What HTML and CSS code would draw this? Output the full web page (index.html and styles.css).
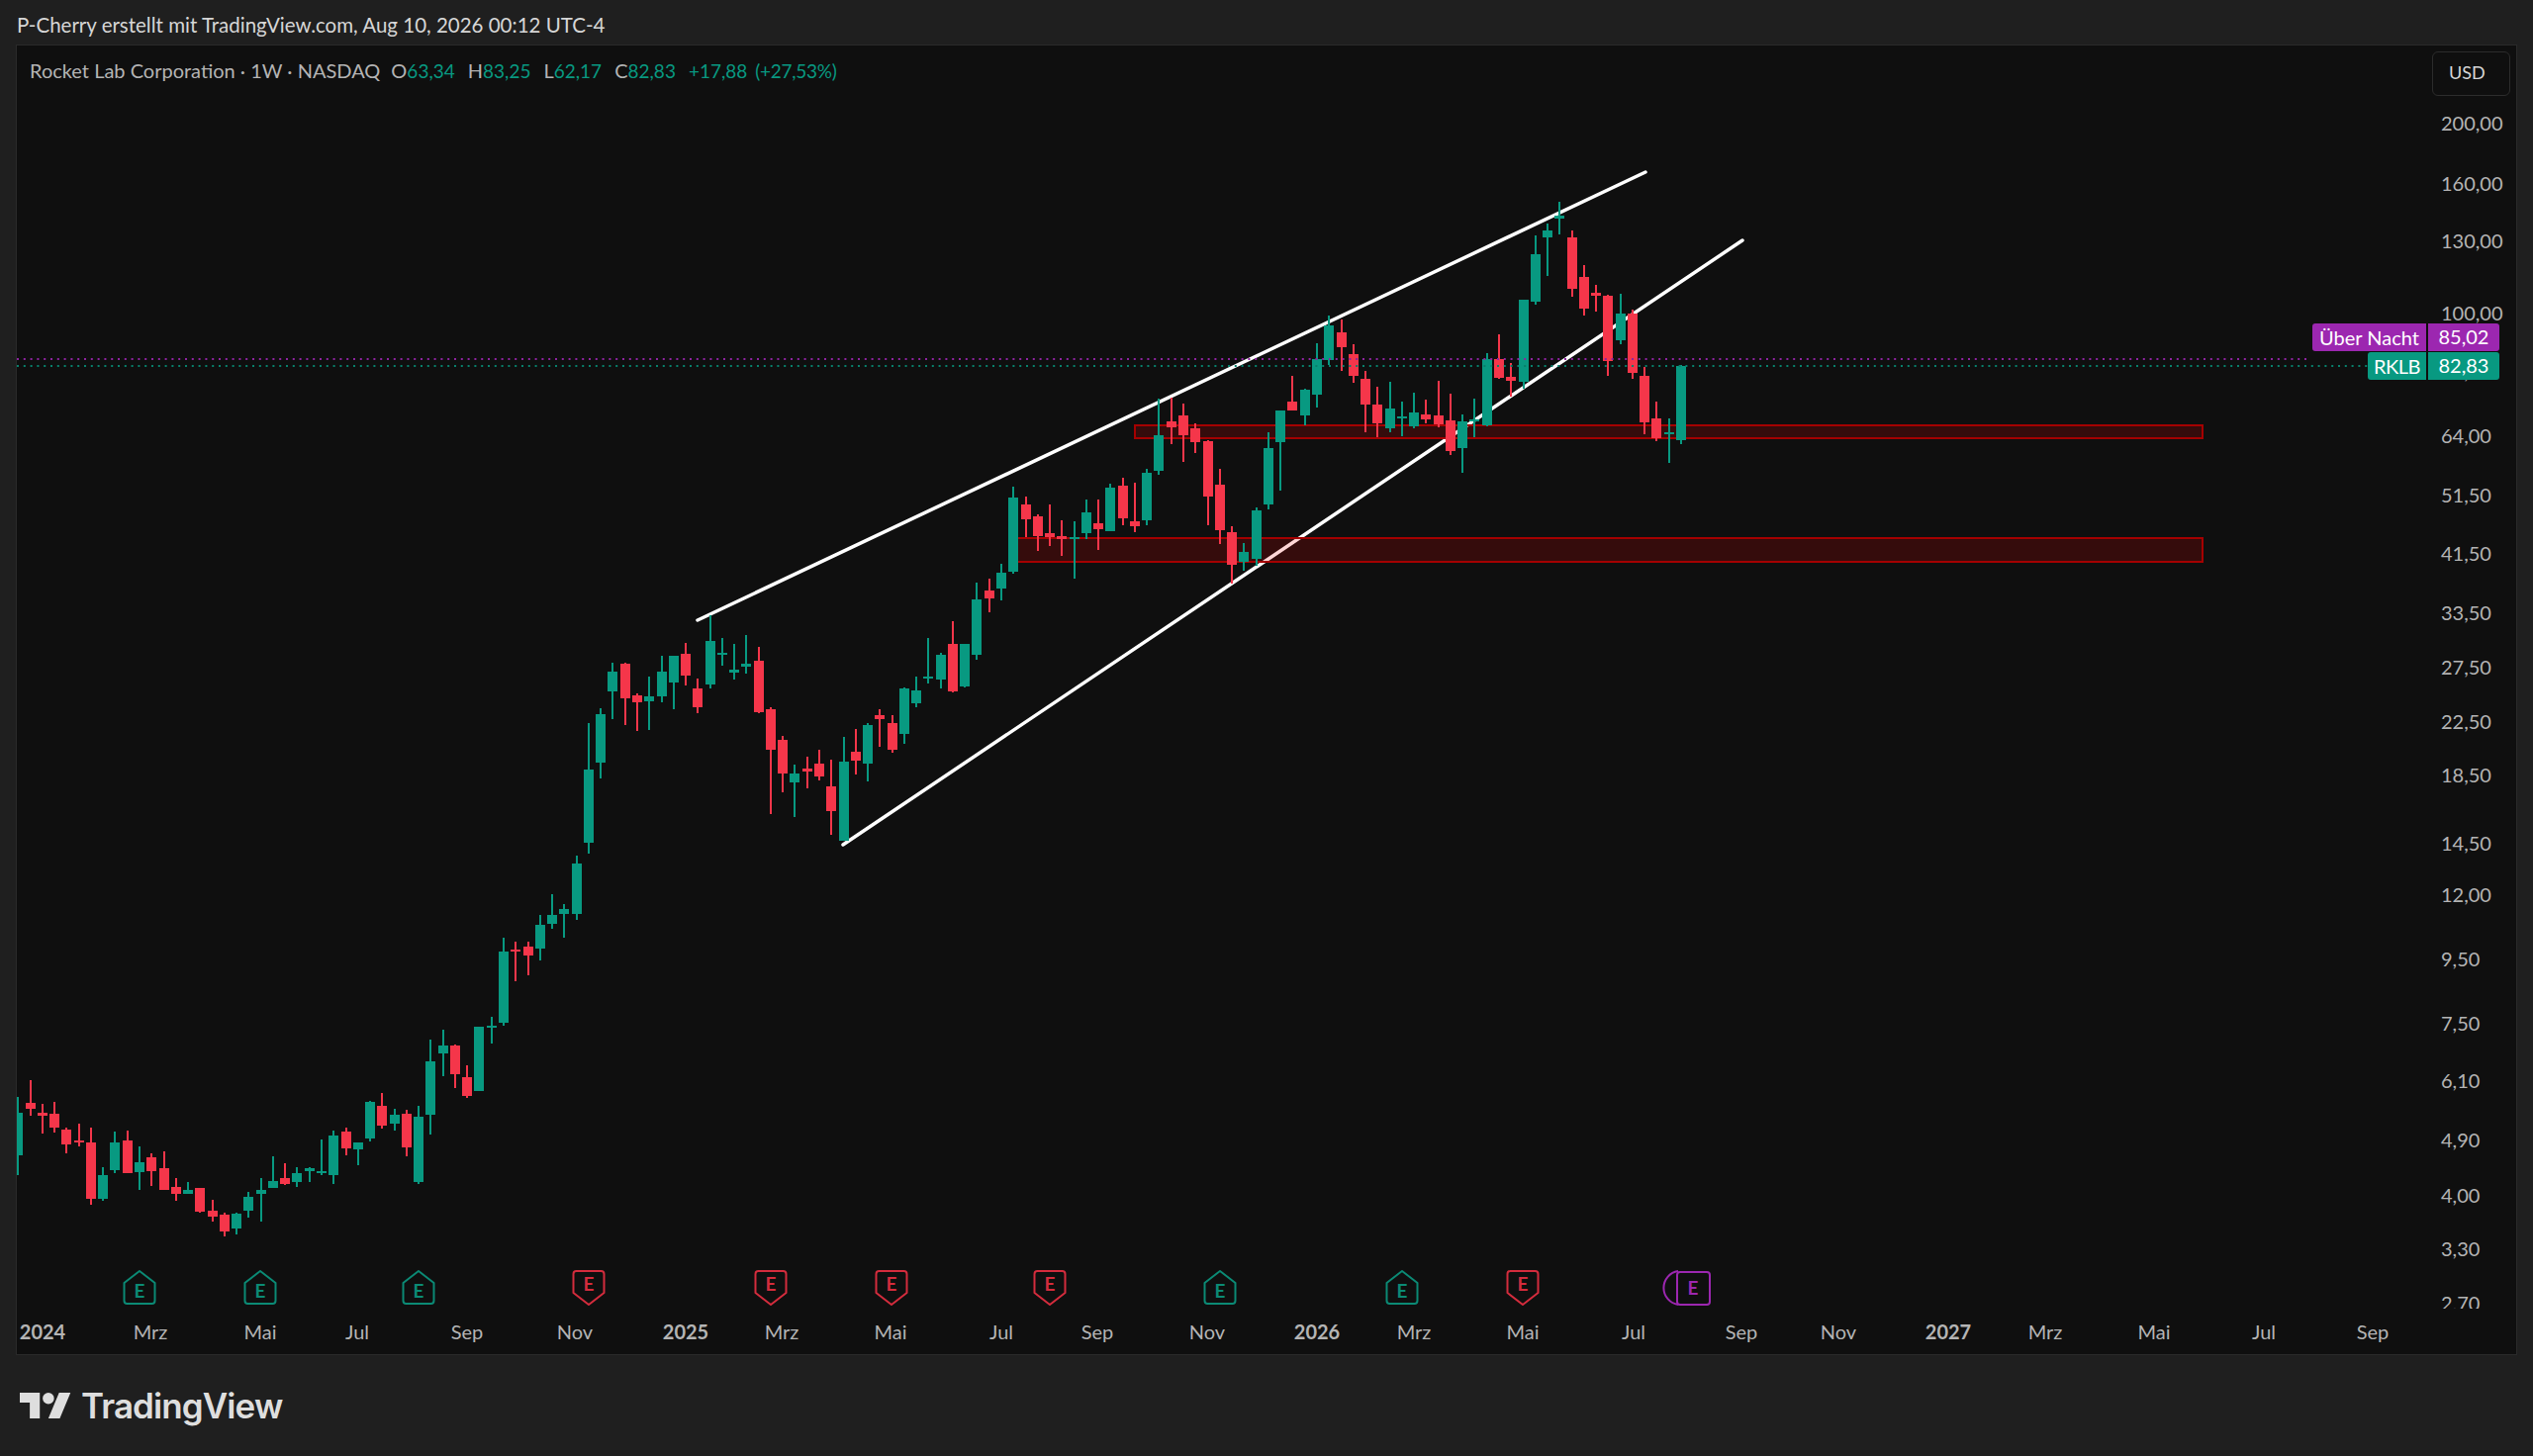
FILE: index.html
```html
<!DOCTYPE html>
<html lang="de">
<head>
  <meta charset="UTF-8">
  <title>RKLB Chart</title>
  <link rel="stylesheet" href="styles.css">
</head>
<body>
  <header class="caption">P-Cherry erstellt mit TradingView.com, Aug 10, 2026 00:12 UTC-4</header>

  <section class="pane">
    <svg id="chart" class="chart" viewBox="17 46 2526 1323" xmlns="http://www.w3.org/2000/svg"></svg>

    <div class="legend">
      <span class="legend-title">Rocket Lab Corporation · 1W · NASDAQ</span>
      <span class="ohlc">O<b>63,34</b></span>
      <span class="ohlc">H<b>83,25</b></span>
      <span class="ohlc">L<b>62,17</b></span>
      <span class="ohlc">C<b>82,83</b></span>
      <span class="change">+17,88</span>
      <span class="change change-pct">(+27,53%)</span>
    </div>

    <div class="currency">USD</div>

    <div class="tags">
      <div class="tag-row tag-purple">
        <span class="tag-name">Über Nacht</span>
        <span class="tag-value">85,02</span>
      </div>
      <div class="tag-row tag-green">
        <span class="tag-name">RKLB</span>
        <span class="tag-value">82,83</span>
      </div>
    </div>
  </section>

  <footer class="footer">
    <svg class="logo" viewBox="0 4 36 18" xmlns="http://www.w3.org/2000/svg">
      <path d="M14 22H7V11H0V4h14v18zM28 22h-8l7.5-18h8L28 22z"/>
      <circle cx="20" cy="8" r="4"/>
    </svg>
    <span class="brand">TradingView</span>
  </footer>

  <script src="chart.js"></script>
</body>
</html>
```

FILE: styles.css
```css
* {
  margin: 0;
  padding: 0;
  box-sizing: border-box;
}

body {
  width: 2560px;
  height: 1472px;
  overflow: hidden;
  display: flex;
  flex-direction: column;
  font-family: "Lato", "Noto Sans", sans-serif;
  background-color: #1f1f1f;
}

.caption {
  height: 46px;
  padding: 13px 0 0 17px;
  font-size: 20.5px;
  line-height: 24px;
  color: #d6d6d6;
}

.pane {
  position: relative;
  width: 2526px;
  height: 1323px;
  margin-left: 17px;
  background-color: #0f0f0f;
  box-shadow: 0 0 0 1px #2a2a2a;
}

.chart {
  display: block;
  width: 100%;
  height: 100%;
}

.trend {
  stroke: #fff;
  stroke-width: 3.5;
  stroke-linecap: round;
}

.zone {
  fill: rgba(255, 0, 0, 0.16);
  stroke: #a50000;
  stroke-width: 2;
}

.up { fill: #089981; }
.down { fill: #f5364a; }

.dots {
  stroke-width: 2;
  stroke-dasharray: 2 4.8;
}
.dots-purple { stroke: #8e24a0; }
.dots-green { stroke: #08806c; }

.axis-label {
  font-size: 20px;
  fill: #b4b4b4;
}

.axis-year {
  font-weight: 700;
}

.marker {
  fill: #0f0f0f;
  stroke-width: 2;
  stroke-linejoin: round;
}

.marker-text {
  font-size: 19px;
  font-weight: 700;
  text-anchor: middle;
  stroke: none;
}

.marker-green { stroke: #0b8a75; }
.marker-green text { fill: #0b8a75; }
.marker-red { stroke: #d42c3d; }
.marker-red text { fill: #d42c3d; }
.marker-purple { stroke: #9c27b0; }
.marker-purple text { fill: #9c27b0; }

.legend {
  position: absolute;
  left: 13px;
  top: 13px;
  display: flex;
  align-items: baseline;
  font-size: 20px;
  line-height: 24px;
  color: #b4b4b4;
}

.ohlc { margin-left: 11px; }
.ohlc + .ohlc { margin-left: 13px; }
.ohlc b,
.change {
  font-size: 19px;
  font-weight: 400;
  color: #089981;
}
.change { margin-left: 13px; }
.change-pct {
  margin-left: 8px;
  letter-spacing: -0.3px;
}

.currency {
  position: absolute;
  left: 2441px;
  top: 6px;
  width: 79px;
  height: 45px;
  padding-left: 16px;
  border: 1px solid #2c2c2c;
  border-radius: 6px;
  font-size: 18px;
  line-height: 41px;
  color: #d6d6d6;
}

.tags {
  position: absolute;
  right: 17px;
  top: 281px;
  display: flex;
  flex-direction: column;
  gap: 1px;
}

.tag-row {
  display: flex;
  justify-content: flex-end;
  gap: 2px;
  height: 28px;
  font-size: 20px;
  line-height: 28px;
  color: #fff;
}

.tag-name {
  padding: 0 7px;
  border-radius: 3px 0 0 3px;
}

.tag-green .tag-name {
  padding: 0 6px;
  letter-spacing: -0.5px;
}

.tag-value {
  width: 72px;
  line-height: 26px;
  text-align: center;
  border-radius: 0 3px 3px 0;
}

.tag-purple span { background-color: #9c27b0; }
.tag-green span { background-color: #089981; }

.footer {
  flex: 1;
  display: flex;
  align-items: center;
  gap: 10px;
  padding-left: 20px;
}

.logo {
  width: 52px;
  height: 26px;
  fill: #dedede;
}

.brand {
  font-family: "Inter", sans-serif;
  font-size: 35px;
  font-weight: 600;
  letter-spacing: -0.9px;
  color: #dedede;
}
```

FILE: chart.js
```js
// Draws the weekly RKLB chart into the svg
const svg = document.getElementById('chart');
const NS = 'http://www.w3.org/2000/svg';

function el(parent, name, attrs, text) {
  const node = document.createElementNS(NS, name);
  for (const key in attrs) node.setAttribute(key, attrs[key]);
  if (text) node.textContent = text;
  parent.appendChild(node);
  return node;
}

// Candles: [wick top, body top, body bottom, wick bottom, colour]
// Each batch holds values in thirds of a pixel, counted down from a base y
const candles = [];
function addCandles(baseY, rows) {
  rows.forEach(function (r) {
    candles.push({
      wickTop: baseY + r[0] / 3,
      top: baseY + r[1] / 3,
      bottom: baseY + r[2] / 3,
      wickBottom: baseY + r[3] / 3,
      up: r[4] === 'g'
    });
  });
}

addCandles(1000, [
  [328,376,503,563,'g'],[276,346,363,384,'r'],[349,374,384,437,'r'],[342,379,419,435,'r'],
  [420,427,472,497,'r'],[407,460,465,476,'r'],[420,465,637,655,'r'],[539,564,637,643,'g'],
  [433,465,549,557,'g'],[430,458,558,558,'r'],[478,526,556,610,'g'],[499,511,551,597,'r'],
  [493,544,609,609,'r'],[574,600,622,642,'r'],[585,610,620,620,'g'],[603,604,675,678,'r'],
  [640,671,690,706,'r'],[678,684,734,749,'r'],[678,681,726,744,'g'],[615,630,673,693,'g'],
  [572,610,622,706,'g'],[508,582,602,602,'g'],[529,572,592,594,'r'],[539,557,584,600,'g'],
  [540,544,553,584,'g'],[456,552,556,564,'g'],[430,445,564,592,'g'],[420,433,483,503,'r'],
  [465,465,485,533,'g'],[339,343,452,461,'g'],[316,354,414,422,'r'],[364,382,407,430,'g'],
  [366,379,480,506,'r'],[354,387,584,590,'g'],[153,220,381,440,'g'],[123,171,194,265,'g'],
  [168,171,259,300,'r'],[232,268,323,331,'r'],[113,113,310,310,'g'],[85,110,116,165,'g']
]);

addCandles(620, [
  [985,1027,1242,1250,'g'],[997,1020,1027,1115,'r'],[997,1012,1037,1097,'r'],[916,944,1017,1052,'g'],
  [853,916,943,957,'g'],[883,898,913,984,'g'],[736,759,913,931,'g'],[333,475,695,728,'g'],
  [288,307,454,500,'g'],[151,176,236,322,'g'],[151,153,258,340,'r'],[244,250,269,358,'r'],
  [192,252,266,353,'g'],[130,176,251,269,'g'],[130,130,210,292,'g'],[90,124,188,218,'r'],
  [198,229,284,302,'r'],[5,84,215,229,'g'],[74,120,125,160,'g'],[93,171,179,201,'g'],
  [67,153,162,183,'g'],[102,145,299,302,'r'],[285,290,413,609,'r'],[373,384,487,543,'r'],
  [460,485,512,617,'g'],[435,472,480,530,'r'],[414,457,495,506,'r'],[445,526,601,672,'r'],
  [376,449,689,689,'g'],[351,419,446,490,'r'],[333,340,456,510,'g'],[290,310,320,404,'r']
]);

addCandles(560, [
  [490,513,593,604,'r'],[404,408,545,575,'g'],[373,414,454,465,'g'],[254,371,378,393,'g'],
  [300,305,380,409,'g'],[204,274,416,419,'r'],[272,274,401,406,'g'],[87,138,307,320,'g'],
  [75,112,134,178,'r'],[31,57,104,140,'g']
]);

addCandles(360, [
  [395,428,653,661,'g'],[427,449,496,548,'r'],[481,487,545,591,'r'],[451,538,548,575,'r'],
  [497,545,554,605,'r'],[502,548,551,674,'g'],[436,475,537,555,'g'],[436,508,524,587,'r'],
  [386,398,532,532,'g'],[370,393,491,512,'r'],[385,500,516,535,'r'],[343,355,497,514,'g'],
  [130,241,347,359,'g'],[125,198,217,268,'r'],[145,181,240,322,'r'],[204,219,261,293,'r'],
  [256,259,425,514,'r'],[343,391,529,570,'r'],[515,535,632,690,'r'],[566,594,623,651,'g'],
  [458,467,615,635,'g'],[232,279,451,464,'g'],[165,165,260,407,'g']
]);

addCandles(180, [
  [601,678,704,706,'r'],[640,641,719,750,'g'],[502,550,658,695,'g'],[418,446,551,566,'g'],
  [430,469,514,585,'r'],[504,533,600,620,'r'],[586,609,686,770,'r'],[634,687,744,786,'r']
]);

addCandles(360, [
  [79,160,220,232,'g'],[139,182,185,243,'g'],[112,170,212,218,'g'],[133,178,192,203,'r'],
  [74,181,207,215,'r'],[114,196,289,299,'r'],[178,198,280,355,'g'],[130,192,197,246,'g']
]);

addCandles(180, [
  [530,550,750,752,'g'],[475,550,605,608,'r'],[560,603,615,663,'r'],[368,370,618,640,'g'],
  [175,231,375,383,'g'],[137,160,180,296,'g'],[71,114,123,170,'g'],[160,180,336,359,'r'],
  [264,299,397,418,'r'],[324,349,357,405,'r'],[355,358,554,600,'r'],[352,411,491,503,'g'],
  [398,411,590,608,'r'],[573,601,742,777,'r'],[677,730,788,797,'r'],[730,771,775,863,'g'],
  [568,570,795,808,'g']
]);

// Trend lines go under everything else
el(svg, 'line', { class: 'trend', x1: 705, y1: 627, x2: 1663, y2: 174 });
el(svg, 'line', { class: 'trend', x1: 852, y1: 854, x2: 1761, y2: 243 });

// Support zones
el(svg, 'rect', { class: 'zone', x: 1147, y: 430, width: 1079, height: 13 });
el(svg, 'rect', { class: 'zone', x: 1024, y: 544, width: 1202, height: 24 });

candles.forEach(function (c, i) {
  const x = Math.round(18.3 + 12.268 * i);
  const cls = c.up ? 'up' : 'down';
  const wickTop = Math.round(c.wickTop);
  const top = Math.round(c.top);
  el(svg, 'rect', { class: cls, x: x - 1, y: wickTop, width: 2, height: Math.round(c.wickBottom) - wickTop });
  el(svg, 'rect', { class: cls, x: x - 5, y: top, width: 10, height: Math.max(Math.round(c.bottom) - top, 2) });
});

// Last price lines
el(svg, 'line', { class: 'dots dots-purple', x1: 17, y1: 363, x2: 2335, y2: 363 });
el(svg, 'line', { class: 'dots dots-green', x1: 17, y1: 370, x2: 2393, y2: 370 });

// Price axis, the lowest label is cut off by the time axis
const defs = el(svg, 'defs', {});
el(el(defs, 'clipPath', { id: 'priceClip' }), 'rect', { x: 2440, y: 46, width: 100, height: 1277 });
const priceAxis = el(svg, 'g', { 'clip-path': 'url(#priceClip)' });
[
  ['200,00', 125], ['160,00', 186], ['130,00', 244], ['100,00', 317], ['80,00', 376],
  ['64,00', 441], ['51,50', 501], ['41,50', 560], ['33,50', 620], ['27,50', 675],
  ['22,50', 730], ['18,50', 784], ['14,50', 853], ['12,00', 905], ['9,50', 970],
  ['7,50', 1035], ['6,10', 1093], ['4,90', 1153], ['4,00', 1209], ['3,30', 1263], ['2,70', 1318]
].forEach(function (t) {
  el(priceAxis, 'text', { class: 'axis-label', x: 2467, y: t[1] + 7 }, t[0]);
});

// Time axis
[
  ['2024', 43], ['Mrz', 152], ['Mai', 263], ['Jul', 361], ['Sep', 472], ['Nov', 581],
  ['2025', 693], ['Mrz', 790], ['Mai', 900], ['Jul', 1012], ['Sep', 1109], ['Nov', 1220],
  ['2026', 1331], ['Mrz', 1429], ['Mai', 1539], ['Jul', 1651], ['Sep', 1760], ['Nov', 1858],
  ['2027', 1969], ['Mrz', 2067], ['Mai', 2177], ['Jul', 2288], ['Sep', 2398]
].forEach(function (t) {
  const isYear = t[0].length === 4;
  el(svg, 'text', {
    class: isYear ? 'axis-label axis-year' : 'axis-label',
    x: t[1], y: 1354, 'text-anchor': 'middle'
  }, t[0]);
});

// Earnings markers
function marker(cx, kind) {
  const g = el(svg, 'g', { class: 'marker marker-' + kind });
  const l = cx - 15.5, r = cx + 15.5;
  if (kind === 'green') {
    el(g, 'path', { d: `M${cx} 1285 L${r} 1297 V1315 Q${r} 1318 ${r - 3} 1318 H${l + 3} Q${l} 1318 ${l} 1315 V1297 Z` });
    el(g, 'text', { class: 'marker-text', x: cx, y: 1312 }, 'E');
  } else {
    el(g, 'path', { d: `M${l + 3} 1285 H${r - 3} Q${r} 1285 ${r} 1288 V1307 L${cx} 1319 L${l} 1307 V1288 Q${l} 1285 ${l + 3} 1285 Z` });
    el(g, 'text', { class: 'marker-text', x: cx, y: 1305 }, 'E');
  }
}

[141, 263, 423, 1233, 1417].forEach(function (x) { marker(x, 'green'); });
[595, 779, 901, 1061, 1539].forEach(function (x) { marker(x, 'red'); });

// Upcoming earnings, a half circle behind the square
const next = el(svg, 'g', { class: 'marker marker-purple' });
el(next, 'path', { d: 'M1696 1285 A17.2 17.2 0 0 0 1696 1319', fill: 'none' });
el(next, 'rect', { x: 1695, y: 1286, width: 33, height: 33, rx: 3 });
el(next, 'text', { class: 'marker-text', x: 1711, y: 1309 }, 'E');
```
